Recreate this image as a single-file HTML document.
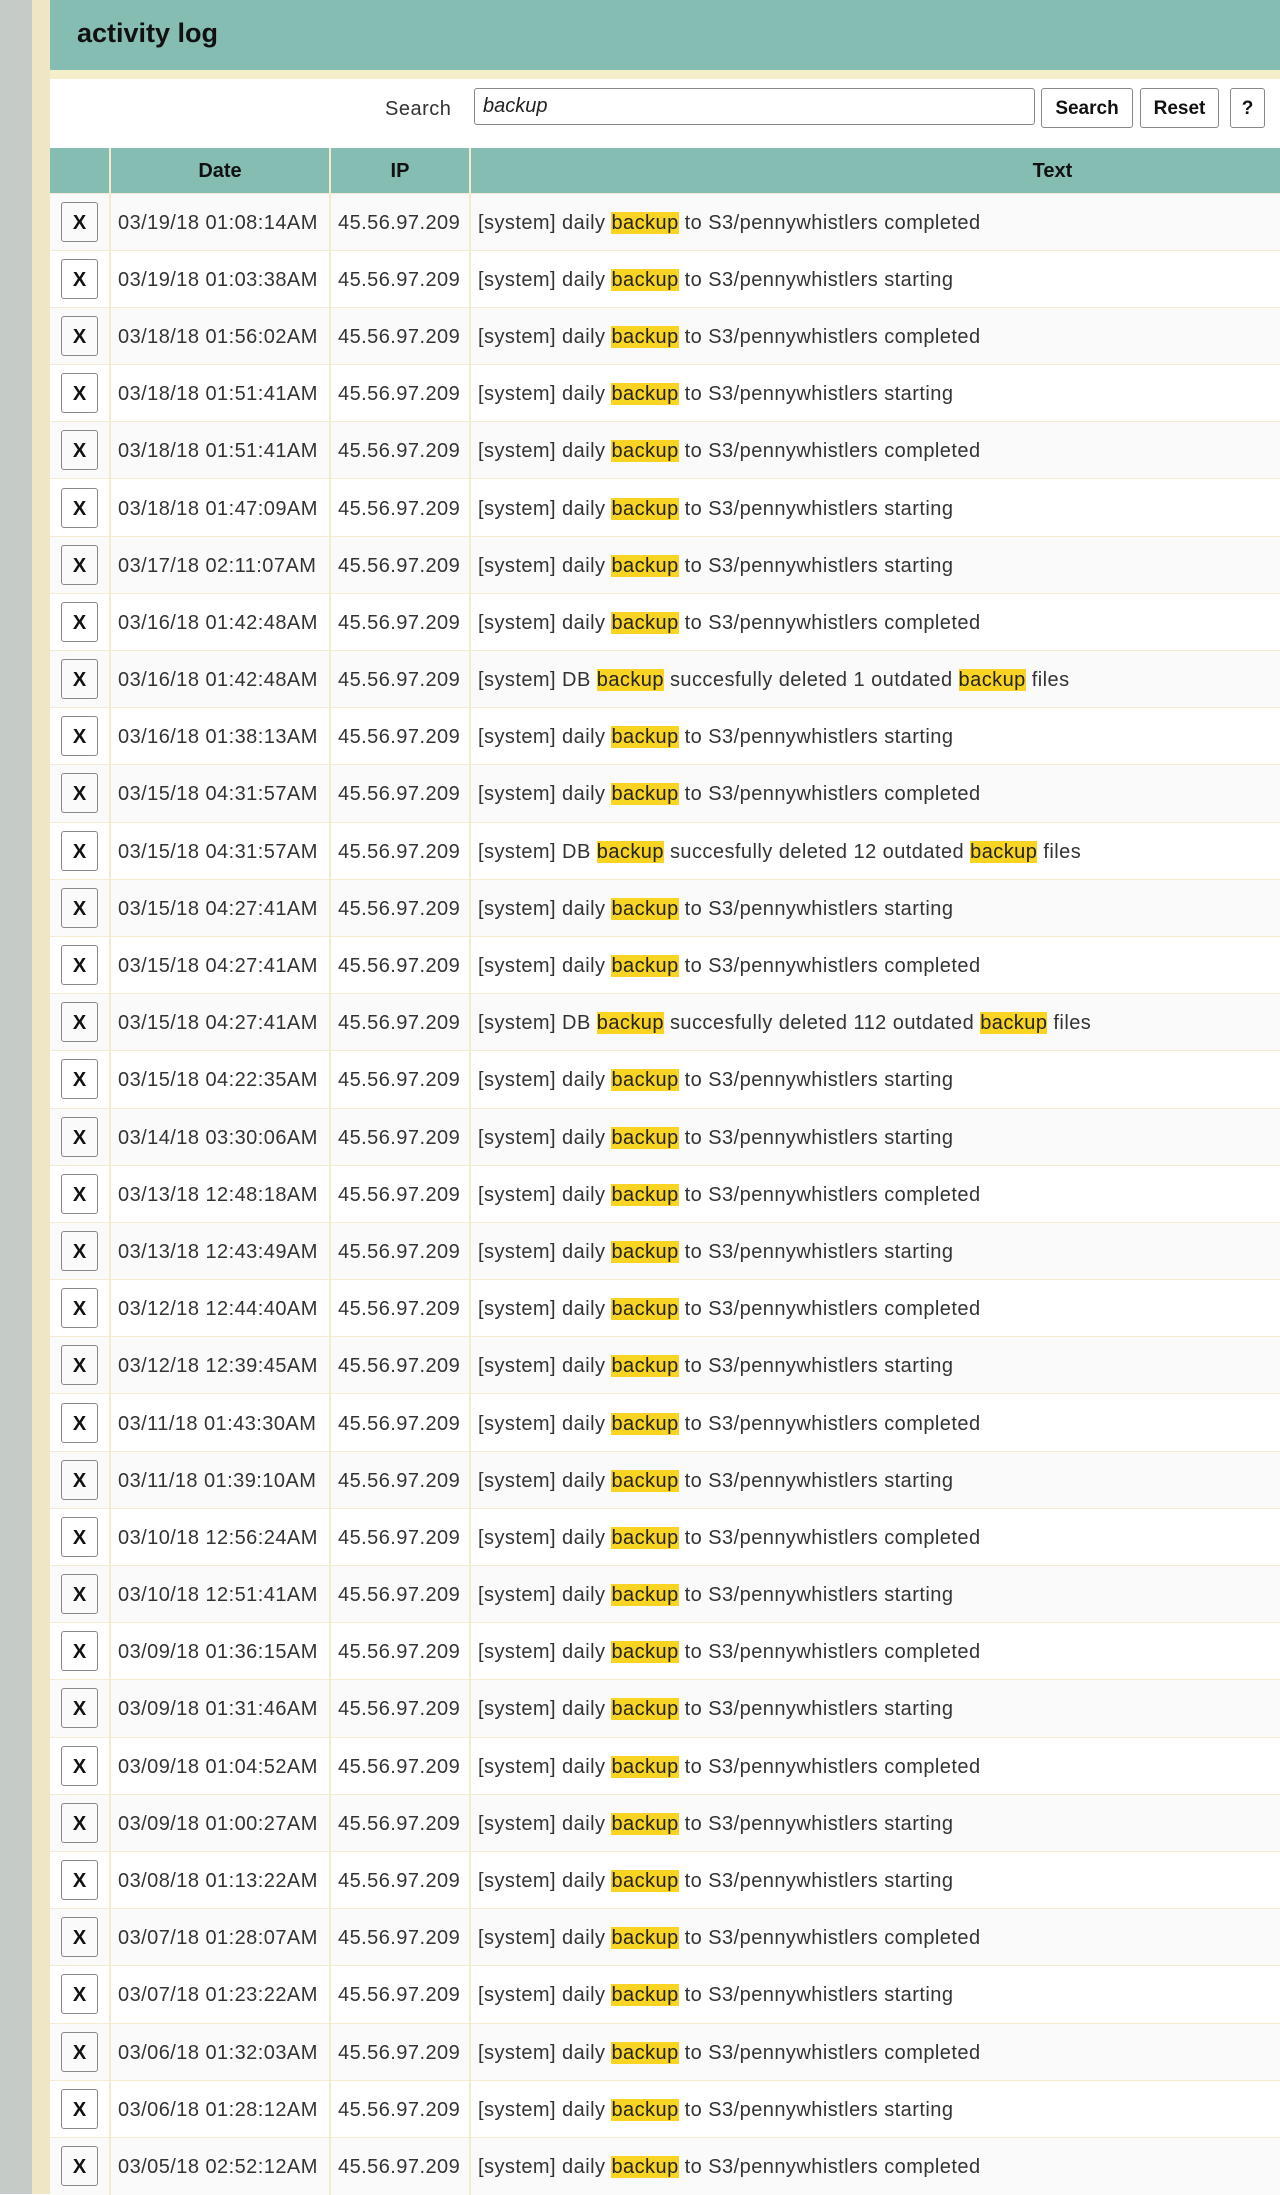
<!DOCTYPE html>
<html><head><meta charset="utf-8"><style>
*{margin:0;padding:0;box-sizing:border-box}
body{width:1280px;height:2194px;overflow:hidden;background:#fff;font-family:"Liberation Sans",sans-serif;color:#222;position:relative}
.g{position:absolute;left:0;top:0;width:32px;height:2194px;background:#c5ccc8}
.b{position:absolute;left:32px;top:0;width:18px;height:2194px;background:#efe6c6}
.main{position:absolute;left:50px;top:0;width:1584px}
.hd{height:70px;background:#86bdb3;padding-left:27px;font-size:27px;font-weight:bold;line-height:66px;color:#111}
.band{height:9px;background:#f5eecb}
.srch{height:69px;position:relative;width:1230px}
.srch .l{position:absolute;left:335px;top:19px;font-size:20px;color:#333;letter-spacing:.5px}
.inp{position:absolute;left:424px;top:9px;width:561px;height:37px;border:1px solid #888;border-radius:3px;font-style:italic;font-size:20px;padding:6px 8px;color:#222}
.btn{position:absolute;top:9px;height:40px;border:1px solid #888;border-radius:3px;font-weight:bold;font-size:19px;text-align:center;line-height:40px;color:#111}
table{border-collapse:collapse;width:1584px;table-layout:fixed}
th{background:#86bdb3;height:45px;font-size:20px;font-weight:bold;color:#111;border-left:2px solid #f3ecd0;padding-top:3px}
th:first-child{border-left:none}
td{height:57.2px;font-size:20px;border-top:1px solid #f3ecd0;border-left:2px solid #f3ecd0;padding-left:7px;padding-top:3px;white-space:nowrap;overflow:hidden;color:#333;letter-spacing:.45px}
td:first-child{border-left:none;padding-left:11px;letter-spacing:0;padding-top:0}
tr:nth-child(odd) td{background:#fafafa}
.x{display:block;width:37px;height:40px;border:1px solid #888;border-radius:3px;text-align:center;line-height:40px;font-weight:bold;font-size:20px;color:#111}
mark{background:#f9d423;color:#222}
</style></head><body>
<div class="g"></div><div class="b"></div>
<div class="main">
<div class="hd">activity log</div>
<div class="band"></div>
<div class="srch"><span class="l">Search</span><div class="inp">backup</div>
<div class="btn" style="left:991px;width:92px">Search</div>
<div class="btn" style="left:1090px;width:79px">Reset</div>
<div class="btn" style="left:1180px;width:35px">?</div></div>
<table>
<colgroup><col style="width:60px"><col style="width:220px"><col style="width:140px"><col></colgroup>
<tr><th></th><th>Date</th><th>IP</th><th>Text</th></tr>
<tbody id="tb"></tbody>
</table>
</div>
<script>
var d=[["03/19/18 01:08:14AM","c"],["03/19/18 01:03:38AM","s"],["03/18/18 01:56:02AM","c"],["03/18/18 01:51:41AM","s"],["03/18/18 01:51:41AM","c"],["03/18/18 01:47:09AM","s"],["03/17/18 02:11:07AM","s"],["03/16/18 01:42:48AM","c"],["03/16/18 01:42:48AM","1"],["03/16/18 01:38:13AM","s"],["03/15/18 04:31:57AM","c"],["03/15/18 04:31:57AM","12"],["03/15/18 04:27:41AM","s"],["03/15/18 04:27:41AM","c"],["03/15/18 04:27:41AM","112"],["03/15/18 04:22:35AM","s"],["03/14/18 03:30:06AM","s"],["03/13/18 12:48:18AM","c"],["03/13/18 12:43:49AM","s"],["03/12/18 12:44:40AM","c"],["03/12/18 12:39:45AM","s"],["03/11/18 01:43:30AM","c"],["03/11/18 01:39:10AM","s"],["03/10/18 12:56:24AM","c"],["03/10/18 12:51:41AM","s"],["03/09/18 01:36:15AM","c"],["03/09/18 01:31:46AM","s"],["03/09/18 01:04:52AM","c"],["03/09/18 01:00:27AM","s"],["03/08/18 01:13:22AM","s"],["03/07/18 01:28:07AM","c"],["03/07/18 01:23:22AM","s"],["03/06/18 01:32:03AM","c"],["03/06/18 01:28:12AM","s"],["03/05/18 02:52:12AM","c"]];
var h="";d.forEach(function(r){var t;if(r[1]=="c")t="[system] daily <mark>backup</mark> to S3/pennywhistlers completed";else if(r[1]=="s")t="[system] daily <mark>backup</mark> to S3/pennywhistlers starting";else t="[system] DB <mark>backup</mark> succesfully deleted "+r[1]+" outdated <mark>backup</mark> files";
h+='<tr><td><span class="x">X</span></td><td>'+r[0]+'</td><td>45.56.97.209</td><td>'+t+'</td></tr>';});
document.getElementById("tb").innerHTML=h;
</script>
</body></html>
